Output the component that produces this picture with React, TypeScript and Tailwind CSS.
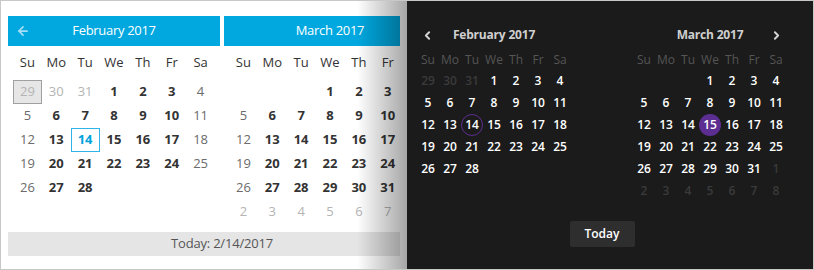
import { ArrowLeft, ChevronLeft, ChevronRight } from 'lucide-react';

type Kind = 'cur' | 'other' | 'none';
interface Day {
  d: number;
  k: Kind;
}

const cur = (d: number): Day => ({ d, k: 'cur' });
const oth = (d: number): Day => ({ d, k: 'other' });
const blank: Day = { d: 0, k: 'none' };

const range = (a: number, b: number) =>
  Array.from({ length: b - a + 1 }, (_, i) => a + i);

const DOW = ['Su', 'Mo', 'Tu', 'We', 'Th', 'Fr', 'Sa'];

const febLight: Day[][] = [
  [oth(29), oth(30), oth(31), cur(1), cur(2), cur(3), cur(4)],
  range(5, 11).map(cur),
  range(12, 18).map(cur),
  range(19, 25).map(cur),
  [cur(26), cur(27), cur(28), blank, blank, blank, blank],
  [blank, blank, blank, blank, blank, blank, blank],
];

const marDark: Day[][] = [
  [blank, blank, blank, cur(1), cur(2), cur(3), cur(4)],
  range(5, 11).map(cur),
  range(12, 18).map(cur),
  range(19, 25).map(cur),
  [...range(26, 31).map(cur), oth(1)],
  range(2, 8).map(oth),
];

const marLight: Day[][] = marDark.map((w) => [...w.slice(0, 6), blank]);

const febDark: Day[][] = febLight.slice(0, 5);

function LightMonth({
  title,
  weeks,
  arrow,
  month,
}: {
  title: string;
  weeks: Day[][];
  arrow?: boolean;
  month: 'feb' | 'mar';
}) {
  const dow = month === 'mar' ? [...DOW.slice(0, 6), ''] : DOW;
  return (
    <div className="w-[212px] shrink-0">
      <div className="relative h-[30px] bg-[#00a8df] flex items-center justify-center text-white text-[13px] tracking-[-0.3px]">
        {arrow && (
          <ArrowLeft
            className="absolute left-[8px] top-[8px] text-[#a6def5]"
            size={14}
            strokeWidth={3}
          />
        )}
        {title}
      </div>
      <div className="px-[5px]">
        <div className="grid grid-cols-7 h-[34px] items-center text-[13px] text-[#333]">
          {dow.map((d, i) => (
            <div key={i} className="text-center">
              {d}
            </div>
          ))}
        </div>
        {weeks.map((w, r) => (
          <div key={r} className="grid grid-cols-7 h-[24px] text-[13px]">
            {w.map((day, c) => {
              const weekend = c === 0 || c === 6;
              const hover = month === 'feb' && r === 0 && c === 0;
              const today = month === 'feb' && day.k === 'cur' && day.d === 14;
              let cls = 'text-[#333] font-bold';
              if (day.k === 'other') cls = 'text-[#b4b4b4]';
              else if (weekend) cls = 'text-[#6b6b6b]';
              if (today) cls = 'text-[#00a3dc] font-bold';
              return (
                <div
                  key={c}
                  className={`flex items-center justify-center ${cls} ${
                    hover ? 'bg-[#e6e6e6] border border-[#a0a0a0]' : ''
                  } ${today ? 'border border-[#2cb5e6]' : ''}`}
                >
                  {day.k !== 'none' ? day.d : ''}
                </div>
              );
            })}
          </div>
        ))}
      </div>
    </div>
  );
}

function DarkMonth({
  title,
  weeks,
  prev,
  next,
  month,
}: {
  title: string;
  weeks: Day[][];
  prev?: boolean;
  next?: boolean;
  month: 'feb' | 'mar';
}) {
  return (
    <div className="w-[154px] shrink-0">
      <div className="relative h-[22px] flex items-center justify-center text-[12px] font-bold text-[#cfcfcf] tracking-[-0.2px]">
        {prev && (
          <ChevronLeft
            className="absolute left-[4px] top-[5px] text-[#d4d4d4]"
            size={13}
            strokeWidth={3.5}
          />
        )}
        {title}
        {next && (
          <ChevronRight
            className="absolute right-[4px] top-[5px] text-[#d4d4d4]"
            size={13}
            strokeWidth={3.5}
          />
        )}
      </div>
      <div className="mt-[4px] grid grid-cols-7 h-[20px] items-center text-[12px] text-[#555]">
        {DOW.map((d) => (
          <div key={d} className="text-center">
            {d}
          </div>
        ))}
      </div>
      {weeks.map((w, r) => (
        <div key={r} className="grid grid-cols-7 h-[22px] text-[12px] font-semibold">
          {w.map((day, c) => {
            const ring = month === 'feb' && day.k === 'cur' && day.d === 14;
            const sel = month === 'mar' && day.k === 'cur' && day.d === 15;
            return (
              <div key={c} className="flex items-center justify-center">
                {day.k !== 'none' && (
                  <span
                    className={`w-[22px] h-[22px] rounded-full flex items-center justify-center ${
                      day.k === 'other' ? 'text-[#3a3a3a]' : 'text-white'
                    } ${ring ? 'border border-[#5c2e91]' : ''} ${
                      sel ? 'bg-[#5c2e91]' : ''
                    }`}
                  >
                    {day.d}
                  </span>
                )}
              </div>
            );
          })}
        </div>
      ))}
    </div>
  );
}

export default function App() {
  return (
    <div className="w-[814px] h-[270px] border border-[#c8c8c8] flex font-['Open_Sans',sans-serif] overflow-hidden">
      {/* Light calendar */}
      <div className="relative w-[406px] h-full bg-white pl-[7px] pt-[15px]">
        <div className="w-[392px] overflow-hidden">
          <div className="w-[428px]">
            <div className="flex gap-[4px]">
              <LightMonth title="February 2017" weeks={febLight} arrow month="feb" />
              <LightMonth title="March 2017" weeks={marLight} month="mar" />
            </div>
            <div className="mt-[8px] h-[24px] bg-[#e5e5e5] flex items-center justify-center text-[13px] text-[#555] tracking-[-0.2px]">
              Today: 2/14/2017
            </div>
          </div>
        </div>
        {/* shadow cast by dark panel */}
        <div className="absolute right-0 top-0 h-full w-[50px] bg-gradient-to-r from-transparent to-black/35 pointer-events-none" />
      </div>

      {/* Dark calendar */}
      <div className="flex-1 h-full bg-[#1b1b1b] pl-[10px] pt-[23px]">
        <div className="w-[370px]">
          <div className="flex gap-[62px]">
            <DarkMonth title="February 2017" weeks={febDark} prev month="feb" />
            <DarkMonth title="March 2017" weeks={marDark} next month="mar" />
          </div>
          <div className="mt-[19px] flex justify-center">
            <button className="w-[65px] h-[26px] bg-[#2e2e2e] rounded-[2px] text-white text-[12px] font-semibold">
              Today
            </button>
          </div>
        </div>
      </div>
    </div>
  );
}
